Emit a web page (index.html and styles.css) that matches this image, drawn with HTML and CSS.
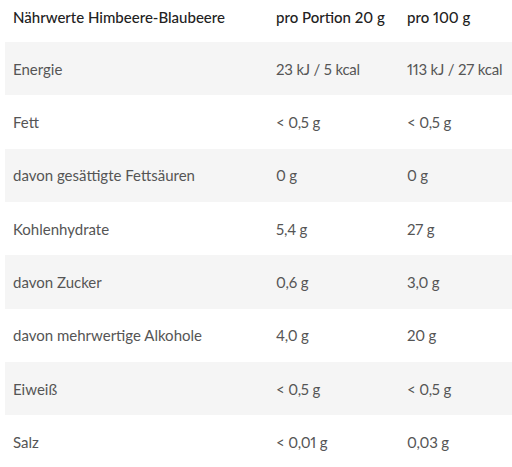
FILE: index.html
```html
<!DOCTYPE html>
<html lang="de">
<head>
<meta charset="utf-8">
<link rel="stylesheet" href="styles.css">
</head>
<body>
<table class="nutri">
  <colgroup><col class="c1"><col class="c2"><col class="c3"></colgroup>
  <thead>
    <tr><th>Nährwerte Himbeere-Blaubeere</th><th>pro Portion 20 g</th><th>pro 100 g</th></tr>
  </thead>
  <tbody>
    <tr class="alt"><td>Energie</td><td>23 kJ / 5 kcal</td><td>113 kJ / 27 kcal</td></tr>
    <tr><td>Fett</td><td>&lt; 0,5 g</td><td>&lt; 0,5 g</td></tr>
    <tr class="alt"><td>davon gesättigte Fettsäuren</td><td>0 g</td><td>0 g</td></tr>
    <tr><td>Kohlenhydrate</td><td>5,4 g</td><td>27 g</td></tr>
    <tr class="alt"><td>davon Zucker</td><td>0,6 g</td><td>3,0 g</td></tr>
    <tr><td>davon mehrwertige Alkohole</td><td>4,0 g</td><td>20 g</td></tr>
    <tr class="alt"><td>Eiweiß</td><td>&lt; 0,5 g</td><td>&lt; 0,5 g</td></tr>
    <tr><td>Salz</td><td>&lt; 0,01 g</td><td>0,03 g</td></tr>
  </tbody>
</table>
</body>
</html>
```
FILE: styles.css
```css
html, body {
  margin: 0;
  padding: 0;
  background: #fff;
}
body {
  font-family: Lato, "Open Sans", sans-serif;
  font-size: 15px;
  color: #555;
  font-variant-numeric: proportional-nums;
}
.nutri {
  margin-left: 5px;
  width: 507px;
  border-collapse: collapse;
  table-layout: fixed;
}
.c1 { width: 263px; }
.c2 { width: 131px; }
.c3 { width: 113px; }
.nutri th {
  text-align: left;
  font-weight: 500;
  color: #222;
  height: 42px;
  padding: 0 8px 8px;
  line-height: 20px;
  white-space: nowrap;
  vertical-align: middle;
  box-sizing: border-box;
}
.nutri td {
  height: 53.33px;
  padding: 0 8px;
  line-height: 20px;
  white-space: nowrap;
  vertical-align: middle;
  box-sizing: border-box;
}
.nutri td + td {
  letter-spacing: -0.2px;
}
.nutri tr.alt td {
  background: #f5f5f5;
}
```
